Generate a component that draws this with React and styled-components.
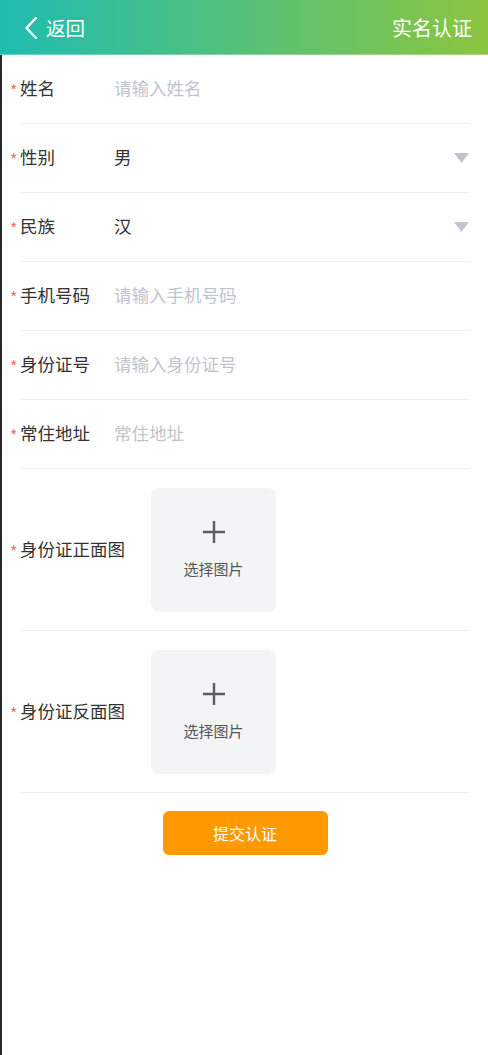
import React from 'react';
import styled, { createGlobalStyle } from 'styled-components';

const GlobalStyle = createGlobalStyle`
  body {
    margin: 0;
    background: #fff;
    font-family: "Noto Sans CJK SC", "Noto Sans", sans-serif;
  }
`;

const fields = [
  { label: '姓名', placeholder: '请输入姓名' },
  { label: '性别', value: '男', select: true },
  { label: '民族', value: '汉', select: true },
  { label: '手机号码', placeholder: '请输入手机号码' },
  { label: '身份证号', placeholder: '请输入身份证号' },
  { label: '常住地址', placeholder: '常住地址' },
];

const uploads = ['身份证正面图', '身份证反面图'];

const App = () => {
  return (
    <Page>
      <GlobalStyle />
      <Header>
        <Back>
          <svg width="14" height="24" viewBox="0 0 14 24">
            <path d="M12 2 L2.5 12 L12 22" fill="none" stroke="#fff" strokeWidth="2.4" strokeLinecap="round" strokeLinejoin="round" />
          </svg>
          <span>返回</span>
        </Back>
        <Title>实名认证</Title>
      </Header>
      <Body>
        {fields.map((f) => (
          <Row key={f.label}>
            <Label>
              <Star>*</Star>
              {f.label}
            </Label>
            <Value $empty={!f.value}>{f.value || f.placeholder}</Value>
            {f.select && (
              <svg width="15" height="10" viewBox="0 0 15 10">
                <path d="M0 0 H15 L7.5 10 Z" fill="#c0c4cc" />
              </svg>
            )}
          </Row>
        ))}
        {uploads.map((u) => (
          <UploadRow key={u}>
            <Label $wide>
              <Star>*</Star>
              {u}
            </Label>
            <UploadBox>
              <svg width="22" height="22" viewBox="0 0 22 22">
                <path d="M11 0 V22 M0 11 H22" stroke="#5c5c5c" strokeWidth="2.4" />
              </svg>
              <UploadText>选择图片</UploadText>
            </UploadBox>
          </UploadRow>
        ))}
        <Submit>提交认证</Submit>
      </Body>
    </Page>
  );
};

const Page = styled.div`
  min-height: 100vh;
  display: flex;
  flex-direction: column;
`;

const Header = styled.header`
  height: 54px;
  padding: 0 16px 0 24px;
  display: flex;
  align-items: center;
  justify-content: space-between;
  background: linear-gradient(to right, #1fbcb1, #8cc53f);
  border-bottom: 1px solid rgba(255, 255, 255, 0.3);
  color: #fff;
  font-size: 19.5px;
`;

const Back = styled.div`
  display: flex;
  align-items: center;
  gap: 8px;
  > svg {
    margin-top: 1px;
  }
`;

const Title = styled.div`
  font-size: 20px;
`;

const Body = styled.main`
  flex: 1;
  border-left: 2px solid #262626;
  padding: 0 18px 40px;
  display: flex;
  flex-direction: column;
`;

const Row = styled.div`
  height: 68px;
  display: flex;
  align-items: center;
  border-bottom: 1px solid #f0f0f0;
  > svg {
    margin-left: auto;
    margin-right: 1px;
  }
`;

const Label = styled.div`
  width: ${(p) => (p.$wide ? '131px' : '94px')};
  flex-shrink: 0;
  font-size: 17.5px;
  line-height: 24px;
  color: #333;
  display: flex;
  align-items: center;
  margin-top: -2px;
`;

const Star = styled.span`
  width: 10px;
  margin-left: -10px;
  color: #f56c6c;
  font-size: 16px;
  line-height: 1;
  margin-top: 3px;
`;

const Value = styled.div`
  font-size: 17.5px;
  line-height: 24px;
  margin-top: -2px;
  color: ${(p) => (p.$empty ? '#c0c4cc' : '#333')};
`;

const UploadRow = styled.div`
  padding: 19px 0 18px;
  display: flex;
  align-items: center;
  border-bottom: 1px solid #f0f0f0;
`;

const UploadBox = styled.div`
  width: 125px;
  height: 124px;
  border-radius: 8px;
  background: #f3f4f6;
  display: flex;
  flex-direction: column;
  align-items: center;
  justify-content: center;
  gap: 16px;
`;

const UploadText = styled.div`
  font-size: 15px;
  line-height: 20px;
  color: #555;
`;

const Submit = styled.button`
  align-self: center;
  margin-top: 18px;
  width: 165px;
  height: 44px;
  border: none;
  border-radius: 6px;
  background: #ff9900;
  color: #fff;
  font-family: inherit;
  font-size: 16px;
`;

export default App;
